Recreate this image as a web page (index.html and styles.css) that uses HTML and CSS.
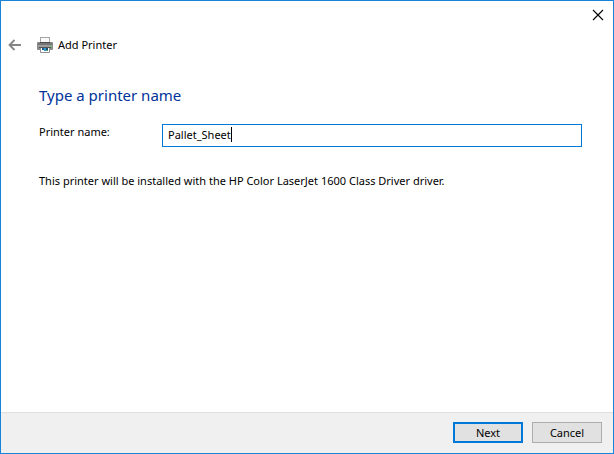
FILE: index.html
```html
<!DOCTYPE html>
<html lang="en">
<head>
<meta charset="utf-8">
<title>Add Printer</title>
<link rel="stylesheet" href="styles.css">
</head>
<body>
<form class="wizard">
  <div class="titlebar">
    <button type="button" class="close" aria-label="Close">
      <svg width="12" height="12" viewBox="0 0 12 12"><path d="M1 1l10 10M11 1L1 11" stroke="#000" stroke-width="1.1" fill="none"/></svg>
    </button>
  </div>
  <header class="header">
    <button type="button" class="back" aria-label="Back">
      <svg width="14" height="12" viewBox="0 0 14 12"><path d="M13 6H2M6.5 1L1.5 6l5 5" stroke="#858585" stroke-width="1.8" fill="none"/></svg>
    </button>
    <svg class="printer" width="16" height="16" viewBox="0 0 16 16">
      <rect x="3.5" y=".5" width="9" height="6" fill="#fafafa" stroke="#a6a6a6"/>
      <rect x="0" y="5" width="16" height="8" rx="1" fill="#8a8a8a"/>
      <rect x="1" y="6" width="14" height="2" fill="#757575"/>
      <rect x="3" y="5" width="10" height="1" fill="#4c4c4c"/>
      <rect x="1" y="8" width="14" height="2" fill="#9c9c9c"/>
      <rect x="13" y="9" width="2" height="1" fill="#6fd36a"/>
      <rect x="2" y="10" width="12" height="1" fill="#555"/>
      <path d="M3.5 11v4.500h9V11" fill="#fff" stroke="#8f8f8f"/>
      <rect x="5" y="11" width="2" height="2" fill="#1d5f8f"/>
      <rect x="7" y="11" width="2" height="3" fill="#2f9bd0"/>
      <rect x="9" y="11" width="2" height="2" fill="#1c4f78"/>
      <rect x="9" y="13" width="2" height="1" fill="#5a9c5a"/>
    </svg>
    <span>Add Printer</span>
  </header>
  <main class="content">
    <h1 class="heading">Type a printer name</h1>
    <div class="field">
      <label for="printer-name">Printer name:</label>
      <div class="entry">
        <input id="printer-name" type="text" value="Pallet_Sheet">
        <span class="caret"></span>
      </div>
    </div>
    <p class="note">This printer will be installed with the HP Color LaserJet 1600 Class Driver driver.</p>
  </main>
  <footer class="footer">
    <button type="button" class="button primary">Next</button>
    <button type="button" class="button">Cancel</button>
  </footer>
</form>
</body>
</html>
```
FILE: styles.css
```css
* {
  box-sizing: border-box;
}

body {
  margin: 0;
  font: 11px/16px "Noto Sans", "Open Sans", sans-serif;
  color: #000;
}

button,
input {
  font: inherit;
  color: inherit;
}

.wizard {
  display: flex;
  flex-direction: column;
  min-height: 100vh;
  border: 1px solid #1883d7;
  background: #fff;
}

.titlebar {
  display: flex;
  justify-content: flex-end;
  height: 28px;
}

.close,
.back {
  display: flex;
  align-items: center;
  justify-content: center;
  padding: 0;
  border: 0;
  background: none;
}

.close {
  width: 30px;
}

.header {
  display: flex;
  align-items: center;
  height: 32px;
  padding-left: 7px;
}

.printer {
  margin: 0 5px 0 15px;
}

.content {
  flex: 1;
  padding: 23px 31px 16px 38px;
}

.heading {
  margin: 0;
  font-size: 15px;
  line-height: 22px;
  font-weight: 400;
  color: #003399;
}

.field {
  display: flex;
  margin-top: 18px;
}

.field label {
  width: 123px;
}

.entry {
  position: relative;
  flex: 1;
}

.entry input {
  display: block;
  width: 100%;
  height: 23px;
  padding: 0 5px 2px;
  border: 1px solid #0078d7;
  background: #fff;
  outline: none;
}

.caret {
  position: absolute;
  top: 3px;
  left: 69px;
  width: 1px;
  height: 15px;
  background: #000;
}

.note {
  margin: 26px 0 0;
}

.footer {
  display: flex;
  justify-content: flex-end;
  gap: 9px;
  padding: 9px 11px 10px;
  border-top: 1px solid #dfdfdf;
  background: #f0f0f0;
}

.button {
  width: 70px;
  height: 21px;
  padding: 0;
  border: 1px solid #adadad;
  background: #e1e1e1;
}

.primary {
  border: 2px solid #0078d7;
}
```
